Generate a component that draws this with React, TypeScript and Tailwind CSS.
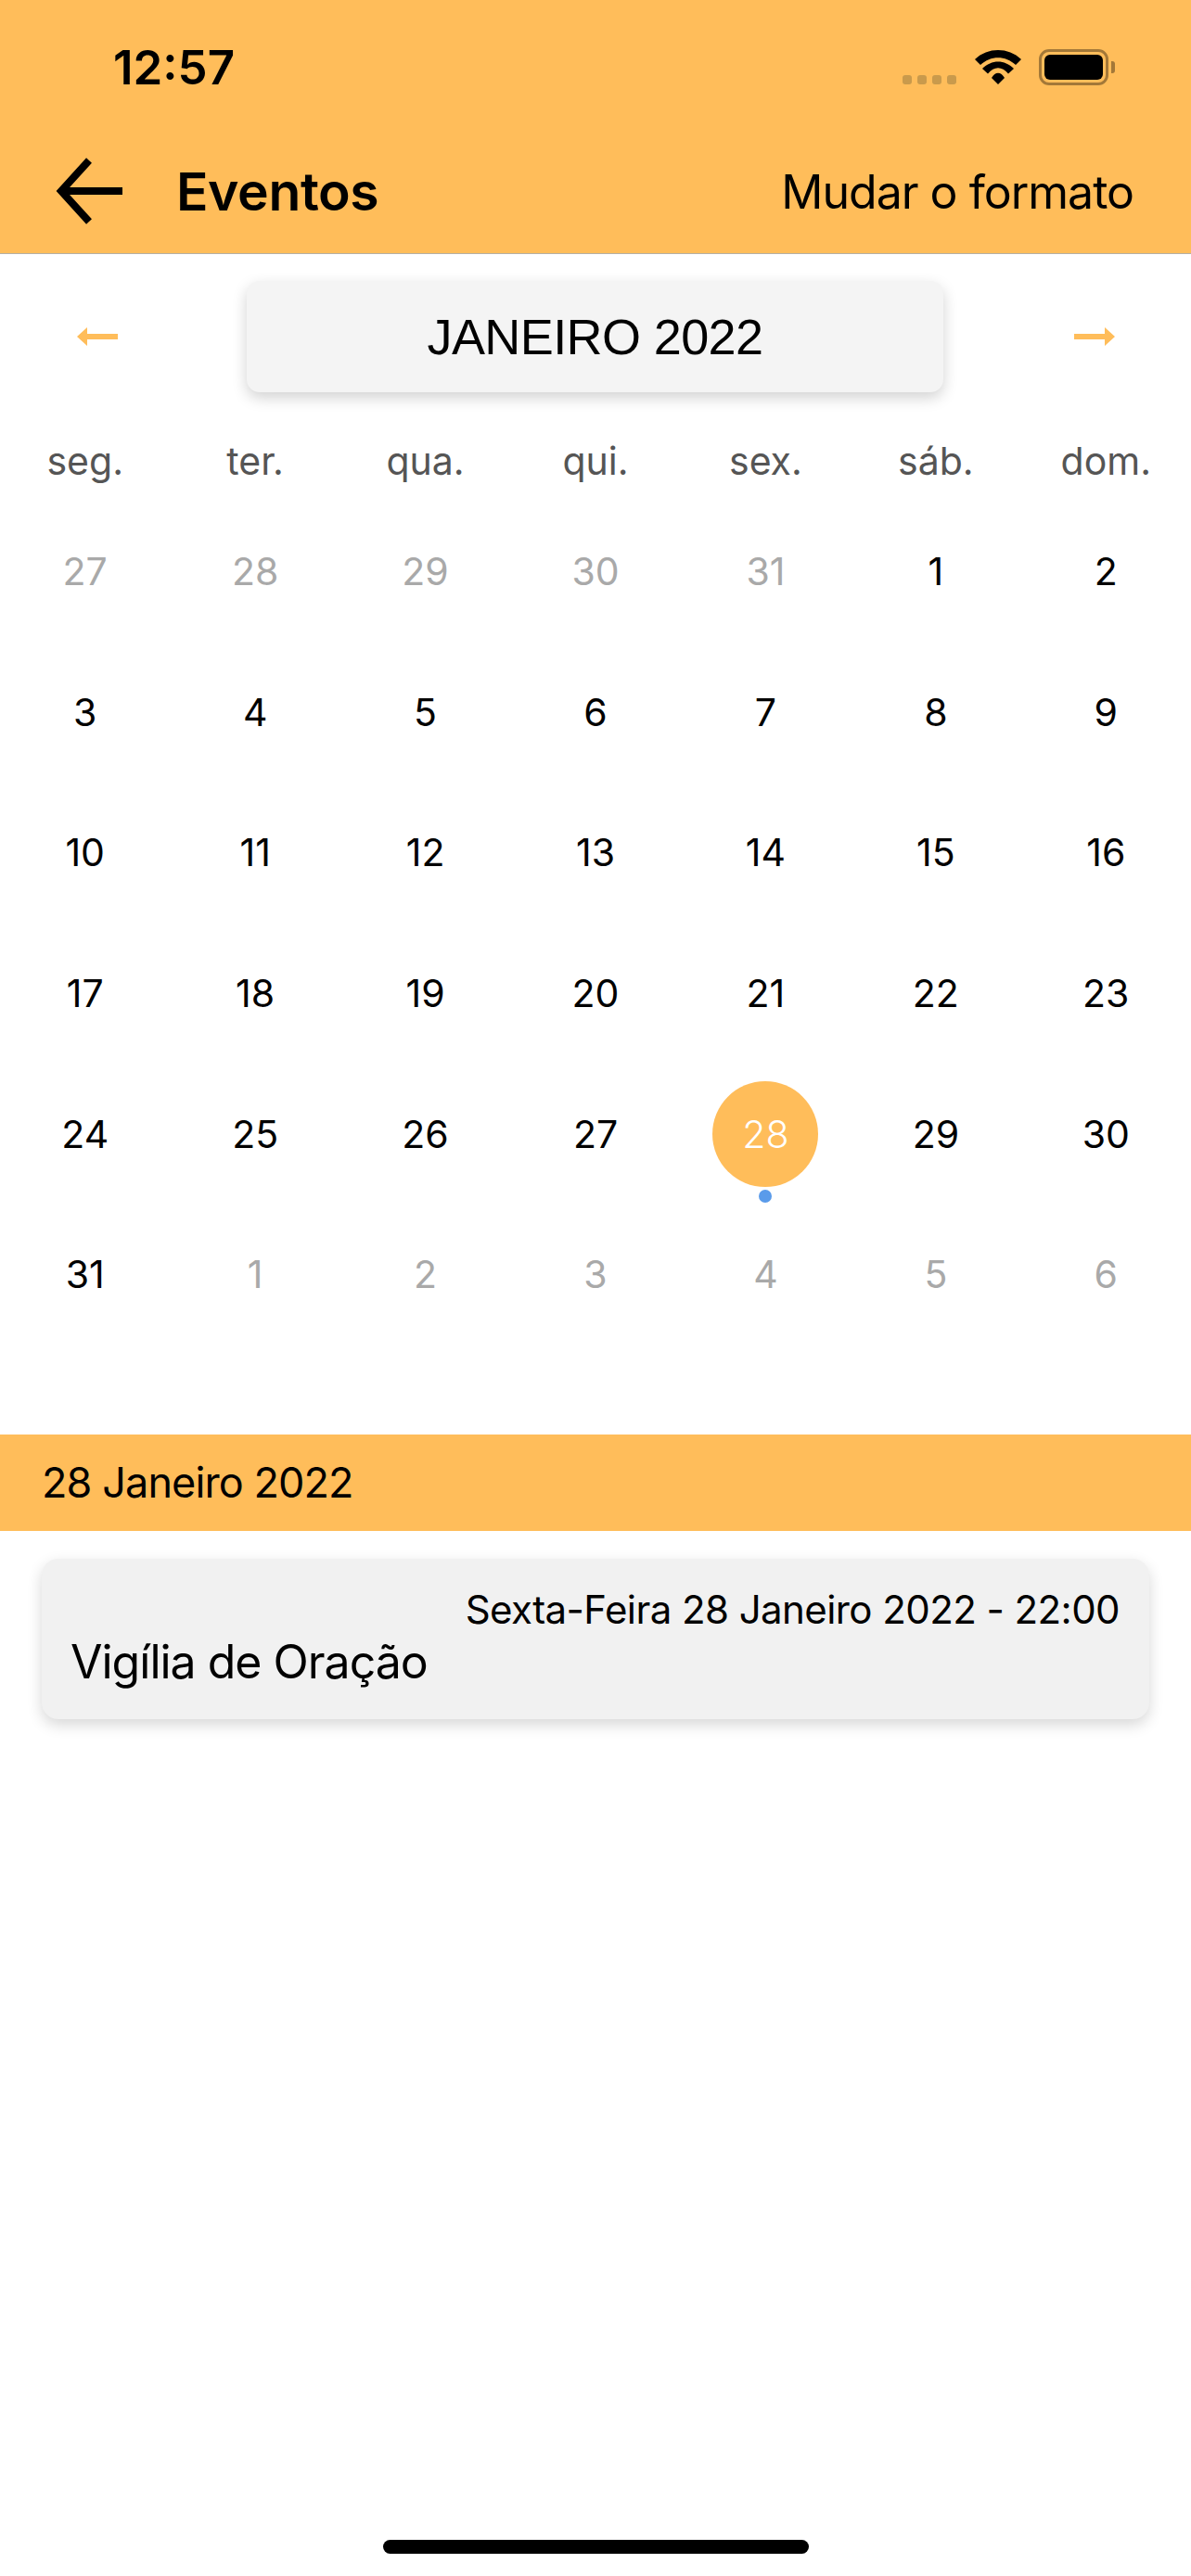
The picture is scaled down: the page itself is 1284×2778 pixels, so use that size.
const weekdays = ["seg.", "ter.", "qua.", "qui.", "sex.", "sáb.", "dom."];

type Day = { label: number; muted?: boolean; selected?: boolean };

const prev = [27, 28, 29, 30, 31].map((label) => ({ label, muted: true }));
const current = Array.from({ length: 31 }, (_, i) => ({ label: i + 1, selected: i + 1 === 28 }));
const next = [1, 2, 3, 4, 5, 6].map((label) => ({ label, muted: true }));
const days: Day[] = [...prev, ...current, ...next];

function StatusIcons() {
  return (
    <div className="flex items-end">
      <div className="mb-[1px] flex gap-[6px]">
        <span className="h-[10px] w-[10px] rounded-[3px] bg-[#c99a4c]" />
        <span className="h-[10px] w-[10px] rounded-[3px] bg-[#c99a4c]" />
        <span className="h-[10px] w-[10px] rounded-[3px] bg-[#c99a4c]" />
        <span className="h-[10px] w-[10px] rounded-[3px] bg-[#c99a4c]" />
      </div>
      <svg width="50" height="37" viewBox="0 0 50 37" className="mb-[1px] ml-[20px]">
        <path d="M0 10 C14 -3.3 36 -3.3 50 10 L44 16 C33 5.5 17 5.5 6 16 Z" fill="#000" />
        <path d="M8 20 C18 10 32 10 42 20 L36 25.5 C29 17 21 17 14 25.5 Z" fill="#000" />
        <path d="M18 30 C22 23 28 23 32 30 L25 37 Z" fill="#000" />
      </svg>
      <div className="relative ml-[19px] flex h-[39px] w-[75px] items-center justify-center rounded-[11px] border-[3px] border-[#a37838]">
        <span className="h-[27px] w-[63px] rounded-[6px] bg-black" />
        <span className="absolute right-[-10px] h-[13px] w-[4px] rounded-r-[3px] bg-[#a37838]" />
      </div>
    </div>
  );
}

function ArrowSmall({ flip }: { flip?: boolean }) {
  return (
    <svg width="44" height="20" viewBox="0 0 44 20" className={flip ? "rotate-180" : ""}>
      <path d="M0 10 L11 0 L11 7 L44 7 L44 13 L11 13 L11 20 Z" fill="#FFBD5A" />
    </svg>
  );
}

export default function App() {
  return (
    <div className="flex min-h-[2778px] flex-col bg-white font-['Inter',sans-serif] text-black">
      <header className="h-[274px] border-b border-[#b5b0a6] bg-[#FFBD5A]">
        <div className="flex h-[170px] items-start justify-between pl-[122px] pr-[89px] pt-[46px]">
          <span className="text-[51px] font-semibold leading-[54px]">12:57</span>
          <div className="pt-[7px]">
            <StatusIcons />
          </div>
        </div>
        <div className="flex h-[72px] items-center justify-between pl-[60px] pr-[62px]">
          <div className="flex items-center gap-[58px]">
            <svg width="72" height="72" viewBox="0 0 72 72" fill="none" stroke="#000" strokeWidth="8">
              <path d="M36 3 L6 36 L36 69" />
              <path d="M6 36 L72 36" />
            </svg>
            <span className="pt-[2px] text-[57px] font-semibold leading-[70px] tracking-[-0.4px]">Eventos</span>
          </div>
          <span className="pt-[2px] text-[50px] leading-[70px] tracking-[-1px]">Mudar o formato</span>
        </div>
      </header>

      <div className="flex items-center justify-between pt-[29px]">
        <div className="flex w-[266px] justify-center pr-[56px]">
          <ArrowSmall />
        </div>
        <div className="flex h-[120px] w-[751px] items-center justify-center rounded-[14px] bg-[#f4f4f4] font-['Liberation_Sans',sans-serif] text-[54px] tracking-[-0.6px] shadow-[0_6px_16px_rgba(0,0,0,0.18)]">
          JANEIRO 2022
        </div>
        <div className="flex w-[267px] justify-center pl-[58px]">
          <ArrowSmall flip />
        </div>
      </div>

      <div className="mt-[49px] grid grid-cols-7">
        {weekdays.map((d) => (
          <div key={d} className="text-center text-[41px] leading-[50px] text-[#555555]">
            {d}
          </div>
        ))}
      </div>

      <div className="mt-[38px] grid grid-cols-7 auto-rows-[151.6px]">
        {days.map((d, i) => (
          <div key={i} className="relative flex h-[114px] items-center justify-center">
            {d.selected ? (
              <>
                <span className="flex h-[114px] w-[114px] items-center justify-center rounded-full bg-[#FFBD5A] text-[41px] font-light text-white">
                  {d.label}
                </span>
                <span className="absolute top-[117px] h-[14px] w-[14px] rounded-full bg-[#5a9bea]" />
              </>
            ) : (
              <span className={d.muted ? "text-[41px] text-[#a9a9a9]" : "text-[41px] text-black"}>{d.label}</span>
            )}
          </div>
        ))}
      </div>

      <div className="mt-[77px] flex h-[104px] items-center bg-[#FFBD5A] pl-[45px] text-[45px] tracking-[-0.9px]">
        28 Janeiro 2022
      </div>

      <div className="mx-[45px] mt-[30px] flex h-[173px] flex-col rounded-[18px] bg-[#f1f1f1] pl-[31px] pr-[32px] pt-[30px] shadow-[0_6px_16px_rgba(0,0,0,0.16)]">
        <div className="text-right text-[42px] leading-[50px] tracking-[-0.57px]">Sexta-Feira 28 Janeiro 2022 - 22:00</div>
        <div className="text-[50px] leading-[62px] tracking-[-1px]">Vigília de Oração</div>
      </div>

      <div className="mt-auto flex justify-center pb-[24px]">
        <span className="h-[15px] w-[459px] rounded-full bg-black" />
      </div>
    </div>
  );
}
